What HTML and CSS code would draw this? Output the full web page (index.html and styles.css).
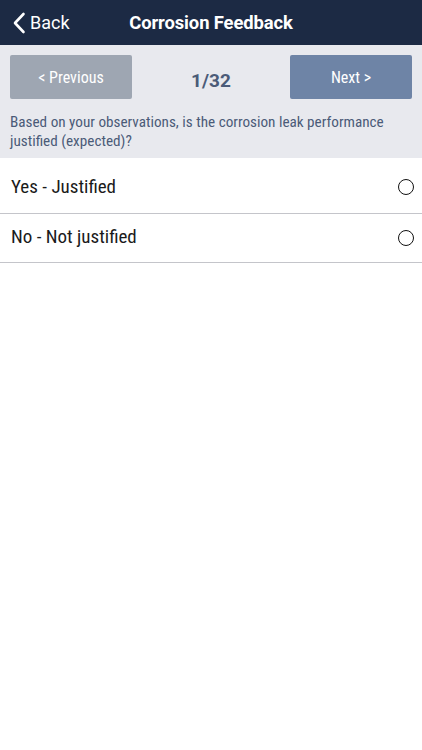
FILE: index.html
```html
<!DOCTYPE html>
<html>
<head>
<meta charset="utf-8">
<link rel="stylesheet" href="styles.css">
</head>
<body>
<div class="app">
  <header class="navbar">
    <div class="back">
      <svg class="chev" width="14" height="22" viewBox="0 0 14 22"><path d="M11.5 2 L3 11 L11.5 20" fill="none" stroke="#fff" stroke-width="2.6" stroke-linecap="round" stroke-linejoin="round"/></svg>
      <span>Back</span>
    </div>
    <div class="title">Corrosion Feedback</div>
    <div class="spacer"></div>
  </header>
  <section class="panel">
    <div class="pager">
      <button class="btn prev">&lt; Previous</button>
      <div class="count">1/32</div>
      <button class="btn next">Next &gt;</button>
    </div>
    <p class="question">Based on your observations, is the corrosion leak performance justified (expected)?</p>
  </section>
  <ul class="options">
    <li class="option option-first"><span>Yes - Justified</span><span class="radio"></span></li>
    <li class="option option-second"><span>No - Not justified</span><span class="radio"></span></li>
  </ul>
</div>
</body>
</html>
```
FILE: styles.css
```css
* { box-sizing: border-box; }
html, body { margin: 0; padding: 0; background: #fff; }
body { font-family: Roboto, "Noto Sans", sans-serif; }
.app { width: 422px; min-height: 750px; background: #fff; }
.navbar {
  height: 45px;
  background: #1c2a44;
  display: grid;
  grid-template-columns: 1fr auto 1fr;
  align-items: center;
  color: #fff;
}
.back { display: flex; align-items: center; gap: 4px; padding-left: 12px; font-size: 18px; }
.chev { display: block; }
.title { font-size: 18.4px; font-weight: 700; letter-spacing: -0.1px; }
.panel { background: #e8e9ee; padding: 10px 10px 0; height: 113px; }
.pager { display: flex; align-items: center; justify-content: space-between; }
.btn {
  width: 122px; height: 44px; border: 0; border-radius: 2px;
  color: #fff; font-family: Roboto, sans-serif; font-stretch: condensed; font-size: 16px;
}
.prev { background: #9ea6b2; }
.next { background: #6e84a6; }
.count { font-size: 19px; font-weight: 700; color: #4b5b78; padding-top: 7px; }
.question {
  margin: 14px 0 0 0; font-size: 15.2px; line-height: 19px; color: #4b5b78; font-stretch: condensed;
}
.options { list-style: none; margin: 0; padding: 0; }
.option {
  display: flex; align-items: center; justify-content: space-between;
  padding: 0 8px 0 11px; border-bottom: 1px solid #c4c5ca;
  font-size: 19px; color: #1a1a1a; font-stretch: condensed; height: 49px;
}
.option-first { height: 56px; padding-top: 2px; }
.option-second { padding-bottom: 4px; }
.radio { width: 16px; height: 16px; border: 1.5px solid #111; border-radius: 50%; }
.option-second .radio { margin-top: 4px; }
```
